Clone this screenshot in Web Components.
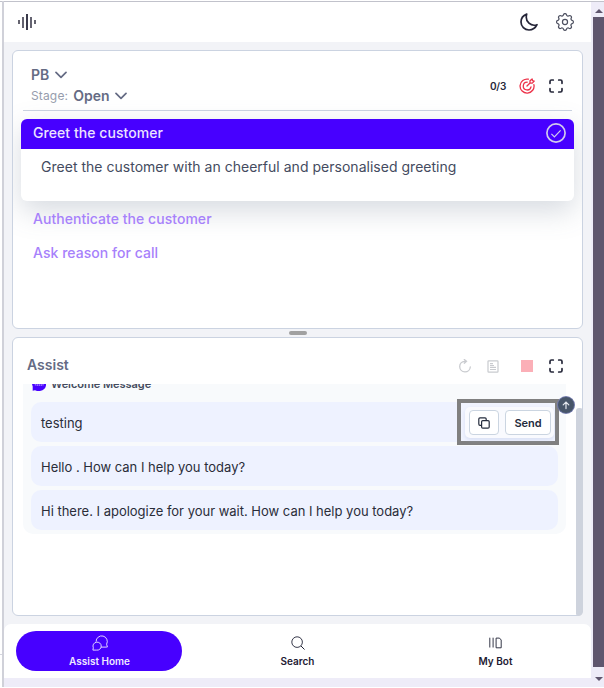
<!DOCTYPE html>
<html lang="en"><head><meta charset="utf-8"><title>Agent Assist</title>
<style>html,body{margin:0;width:604px;height:688px;overflow:hidden;background:#fff}body{font-family:Inter,"Liberation Sans",sans-serif;color:#202124}</style></head><body>
<assist-app></assist-app>
<script>
const define=(name,html)=>{const t=document.createElement('template');t.innerHTML='<style>*{box-sizing:border-box}svg{display:block;fill:none;stroke:currentColor;flex:none}</style>'+html;
customElements.define(name,class extends HTMLElement{constructor(){super();this.attachShadow({mode:'open'}).append(t.content.cloneNode(true));}});};

const icons={
wave:['0 0 18 18','<path d="M1 7v4M17 7v4" stroke="#555461" stroke-width="1.8"/><path d="M5 4v11M13 4v11" stroke="#4a4959" stroke-width="1.7"/><path d="M9 1v16" stroke-width="1.8"/>'],
moon:['0 0 18 18','<path d="M6.7 1.1C3.5 2.3 1 5 1 9a8 8 0 0 0 8 8c3.5 0 6.5-2.1 8-5.3-5.5 2-12.5-2.4-10.3-10.6Z" stroke-width="1.7" stroke-linejoin="round"/>'],
gear:['0 0 24 24','<path d="M10.3 4.3c.4-1.8 3-1.8 3.4 0a1.7 1.7 0 0 0 2.6 1.1c1.6-.9 3.4.8 2.4 2.4a1.7 1.7 0 0 0 1 2.5c1.8.4 1.8 3 0 3.4a1.7 1.7 0 0 0-1 2.6c1 1.6-.8 3.4-2.4 2.4a1.7 1.7 0 0 0-2.6 1c-.4 1.8-3 1.8-3.4 0a1.7 1.7 0 0 0-2.6-1c-1.6 1-3.3-.8-2.4-2.4a1.7 1.7 0 0 0-1-2.6c-1.8-.4-1.8-3 0-3.4a1.7 1.7 0 0 0 1-2.5c-.9-1.6.8-3.3 2.4-2.4 1 .6 2.3 0 2.6-1.1Z" transform="translate(-2.9 -2.9) scale(1.24)" stroke-width="1.3"/><circle cx="12" cy="12" r="3.4" stroke-width="1.6"/>'],
down:['0 0 12 8','<path d="M1 1.4 6 6.3l5-4.9" stroke-width="1.7" stroke-linecap="round" stroke-linejoin="round"/>'],
target:['0 0 16 16','<path d="M9.4 1.2A7 7 0 1 0 14.9 6.6M8.2 4.2a3.9 3.9 0 1 0 3.8 4.7M8 8l3-3V2.7L13.1.9l.4 1.7 1.7.5-1.9 2H11" stroke-width="1.3" stroke-linecap="round" stroke-linejoin="round"/>'],
expand:['0 0 14 14','<path d="M1 4.3V2.5Q1 1 2.5 1h1.8M9.7 1h1.8Q13 1 13 2.5v1.8M13 9.7v1.8q0 1.5-1.5 1.5H9.7M4.3 13H2.5Q1 13 1 11.5V9.7" stroke-width="1.7" stroke-linecap="round"/>'],
check:['0 0 20 20','<circle cx="10" cy="10" r="9.1" stroke-width="1.7"/><path d="m5.4 10.8 3 3 6.2-6.4" stroke-width="1.2"/>'],
redo:['0 0 14 14','<path d="M8.5 2.3H6.6A5.3 5.3 0 1 0 12.3 8M6.3.5l2.2 1.8-2.2 1.9" stroke-width="1.3" stroke-linecap="round"/>'],
doc:['0 0 12 13','<rect x="1" y=".8" width="10" height="11.4" rx=".7" stroke-width="1.2"/><path d="M3 3.6h3M3 5.5h4M3 7.4h6M3 9.5h6" stroke-width="1.1"/>'],
copy:['0 0 12 12','<path d="M3.2 8.3H2Q.8 8.3.8 7V2Q.8.8 2 .8h5Q8.2.8 8.2 2v1.1" stroke-width="1.2"/><rect x="3.6" y="3.6" width="7.6" height="7.6" rx="1.2" stroke-width="1.2"/>'],
up:['0 0 10 10','<path d="M5 8.6V2M2.2 4.8 5 2l2.8 2.8" stroke-width="1.2" stroke-linecap="round"/>'],
chats:['0 0 16 16','<path d="M4.1 6.6A5.6 5.6 0 1 1 14.6 9.2l.8 2.8-1.2.1H8.8M4.6 7.2a4 4 0 1 1 0 7.9H.9l.4-2.3A4 4 0 0 1 4.6 7.2Z" stroke-width=".9" stroke-linejoin="round"/>'],
search:['0 0 14 14','<circle cx="6.1" cy="6.1" r="5.3" stroke-width=".9"/><path d="m10 10 3.5 3.5" stroke-width="1"/>'],
books:['0 0 13 12','<path d="M.8.7v9.8M4.1.7v9.8" stroke-width=".9"/><path d="M7.1 1.1h3.4L12.2 3v7.8H7.1Z" stroke-width=".9"/>'],
bubble:['0 0 14 14','<path d="M7 0a7 7 0 0 0-7 7l.7 2.5V13.8l2.3-.5 2 .7h3A6.5 6.5 0 0 0 14 7 7 7 0 0 0 7 0Z" fill="#4700ff" stroke="none"/><path d="M3.3 7.2v1.3M5.2 7.2v1.8M7.2 7.2v1.8M9.2 7.2v1.8M11 7.2v1.3" stroke="#d5c8ff" stroke-width=".8"/>']};
customElements.define('ui-icon',class extends HTMLElement{connectedCallback(){if(this.shadowRoot)return;const i=icons[this.getAttribute('name')],w=this.getAttribute('w'),h=this.getAttribute('h')||w;
this.attachShadow({mode:'open'}).innerHTML=`<style>:host{display:block;flex:none;width:${w}px;height:${h}px}svg{display:block;fill:none;stroke:currentColor}</style><svg width="${w}" height="${h}" viewBox="${i[0]}">${i[1]}</svg>`;}});

define('top-bar',`<style>:host{display:flex;align-items:center;height:41px;background:#fff;border-top:1px solid #c1c2cb;padding:0 17px 0 14px;color:#252538}.r{margin-left:auto;display:flex;gap:18px;align-items:center}.r ui-icon:last-child{color:#4d5060}</style><ui-icon name="wave" w="18"></ui-icon><div class="r"><ui-icon name="moon" w="18"></ui-icon><ui-icon name="gear" w="18"></ui-icon></div>`);

define('ui-panel',`<style>:host{display:block;height:279px;border:1px solid #cbd3e1;border-radius:6px;background:#fff;overflow:hidden}</style><slot></slot>`);

define('playbook-head',`<style>:host{display:flex;height:60px;margin:0 10px;padding:0 9px 0 8px;border-bottom:1px solid #cbd3e1;color:#656b84}.l{padding-top:13px;font-size:14px;font-weight:600}.row{display:flex;align-items:center;height:21px;gap:6px}.row small{font-size:12px;font-weight:400;color:#969dad;letter-spacing:.15px;margin-right:-1px}.r{display:flex;align-items:center;margin:10px 0 0 auto;height:49px;color:#26283a;font-size:10px;font-weight:600;letter-spacing:-.25px}.r ui-icon:nth-of-type(1){margin:0 14px 0 13px;color:#ed334a}</style>
<div class="l"><div class="row"><span>PB</span><ui-icon name="down" w="12" h="8"></ui-icon></div><div class="row"><small>Stage:</small><span>Open</span><ui-icon name="down" w="12" h="8"></ui-icon></div></div><div class="r"><span>0/3</span><ui-icon name="target" w="16"></ui-icon><ui-icon name="expand" w="14"></ui-icon></div>`);

define('step-card',`<style>:host{display:block;margin:8px 8px 0;height:82px;border-radius:6px;background:#fff;box-shadow:0 10px 28px #60708840;overflow:visible;font-size:14px}.h{height:30px;border-radius:6px 6px 0 0;background:#4700ff;color:#ebe3ff;padding:0 8px 3px 12px;display:flex;align-items:center;justify-content:space-between;font-weight:500;letter-spacing:.06px}.h ui-icon{margin-top:1px;color:#d1caed}.b{padding:9px 20px;line-height:18px;color:#444b60;white-space:nowrap;letter-spacing:.02px}</style><div class="h"><slot name="title"></slot><ui-icon name="check" w="20"></ui-icon></div><div class="b"><slot></slot></div>`);
define('next-step',`<style>:host{display:flex;align-items:center;height:34px;padding-left:20px;font-size:14px;font-weight:500;color:#a781fb;position:relative;letter-spacing:.04px}</style><slot></slot>`);

define('assist-head',`<style>:host{display:flex;align-items:center;height:46px;padding:10px 19px 0 14px;font-size:14px;font-weight:600;color:#656b84}span{margin-top:-3px}.r{margin-left:auto;display:flex;align-items:center;color:#c9cbcf}.sq{width:12px;height:12px;background:#fbafb7;margin:0 15px 0 22px}.r ui-icon:nth-of-type(2){margin-left:15px}.r ui-icon:nth-of-type(3){color:#26283a;margin-left:1px}</style><span>Assist</span><div class="r"><ui-icon name="redo" w="14"></ui-icon><ui-icon name="doc" w="12" h="13"></ui-icon><div class="sq"></div><ui-icon name="expand" w="14"></ui-icon></div>`);
define('message-row',`<style>:host{display:flex;align-items:center;position:relative;height:40px;padding:1px 10px 0;border-radius:10px;background:#eef2ff;color:#2a2d39;font-size:13px;white-space:nowrap;letter-spacing:-.01px}</style><slot></slot>`);
define('message-actions',`<style>:host{position:absolute;left:426px;top:-3px;box-sizing:border-box;width:102px;height:46px;border:4px solid #808080;background:#f1f4ff;padding:4px;display:block}.box{width:89px;height:31px;background:#f9fafe;border-radius:5px;box-shadow:0 2px 4px #a5b4dc55;display:flex;gap:6px;padding:3px 4px}.b{flex:none;height:25px;border:1px solid #cbd5e1;border-radius:4px;background:#fff;display:flex;align-items:center;justify-content:center;font-size:11px;font-weight:600;width:46px;color:#252c3d}.b:first-child{width:30px}</style><div class="box"><div class="b"><ui-icon name="copy" w="12"></ui-icon></div><div class="b">Send</div></div>`);
define('message-group',`<style>:host{display:block;height:150px;margin:0 16px 0 10px;background:#f8fafc;border-radius:0 0 10px 10px;padding:0 8px;position:relative}.clip{height:18px;overflow:hidden}.t{display:flex;gap:6px;align-items:center;height:14px;margin:-7px 0 0 1px;font-size:11px;font-weight:600;color:#444b5c;letter-spacing:-.04px}.t span{margin-left:-1px}.list{display:flex;flex-direction:column;gap:4px}.up{position:absolute;left:535px;top:13px;width:16px;height:16px;border-radius:50%;background:#475569;box-shadow:0 0 0 1px #7179ac;color:#e5e8ee;display:grid;place-items:center}</style><div class="clip"><div class="t"><ui-icon name="bubble" w="14"></ui-icon><span>Welcome Message</span></div></div><div class="list"><slot></slot></div><div class="up"><ui-icon name="up" w="10"></ui-icon></div>`);

define('nav-item',`<style>:host{width:166px;height:40px;box-sizing:border-box;display:flex;flex-direction:column;align-items:center;padding-top:3px;border-radius:20px;font-size:10px;font-weight:600;color:#1e2033}:host([active]){background:#4700ff;color:#efe9ff}.i{height:17px;display:grid;place-items:center;padding-left:1px}.l{line-height:17px;margin-top:2px;padding-left:1px}</style><div class="i"><slot name="icon"></slot></div><div class="l"><slot></slot></div>`);
define('bottom-nav',`<style>:host{box-sizing:border-box;height:54px;display:flex;gap:32px;padding:7px 12px;background:#fff;border-radius:7px 7px 0 0}::slotted(:not([active])){color:#1e2033}</style><slot></slot>`);
define('page-scroll',`<style>:host{box-sizing:border-box;display:flex;flex-direction:column;align-items:center;height:686px;background:#eeecf8;padding:7px 0 4px 2px;border-top:1px solid #c1c2cb}i{border:4px solid transparent}.u{border-top:0;border-bottom:4px solid #5f566e}.t{width:100%;height:650px;background:#5f566e;margin:4px 0 10px}.d{border-bottom:0;border-top:4px solid #5f566e}</style><i class="u"></i><div class="t"></div><i class="d"></i>`);

define('assist-app',`<style>:host{display:grid;grid-template-columns:2px 2px 587px 13px;height:688px;padding-top:1px;box-sizing:border-box}.edge{height:654px;border-top:1px solid #c1c2cb;border-bottom:1px solid #d4d5de}.rule{background:#d0d1d9;height:686px}.main{background:#f2f3f7;height:686px;overflow:hidden}top-bar{box-sizing:border-box}ui-panel,playbook-head,step-card,next-step{box-sizing:border-box}.stack{height:582px;padding:8px 8px 0}.handle{height:8px;display:grid;place-items:center}.handle i{width:18px;height:4px;border-radius:2px;background:#a1a1a1;margin-left:1px}.foot{height:9px;background:#eeecf8}.second{position:relative;overflow:visible}.thumb{position:absolute;right:-1px;top:70px;width:7px;height:208px;border-radius:4px 4px 6px 3px;background:#ced3dd}</style>
<div class="edge"></div><div class="rule"></div><div class="main"><top-bar></top-bar><div class="stack">
<ui-panel><playbook-head></playbook-head><step-card><span slot="title">Greet the customer</span><span>Greet the customer with an cheerful and personalised greeting</span></step-card><next-step>Authenticate the customer</next-step><next-step>Ask reason for call</next-step></ui-panel><div class="handle"><i></i></div>
<ui-panel class="second"><assist-head></assist-head><message-group><message-row>testing<message-actions></message-actions></message-row><message-row>Hello . How can I help you today?</message-row><message-row>Hi there. I apologize for your wait. How can I help you today?</message-row></message-group><div class="thumb"></div></ui-panel></div>
<bottom-nav><nav-item active><ui-icon slot="icon" name="chats" w="16"></ui-icon>Assist Home</nav-item><nav-item><ui-icon slot="icon" name="search" w="14"></ui-icon>Search</nav-item><nav-item><ui-icon slot="icon" name="books" w="13" h="12"></ui-icon>My Bot</nav-item></bottom-nav><div class="foot"></div></div><page-scroll></page-scroll>`);
</script></body></html>
